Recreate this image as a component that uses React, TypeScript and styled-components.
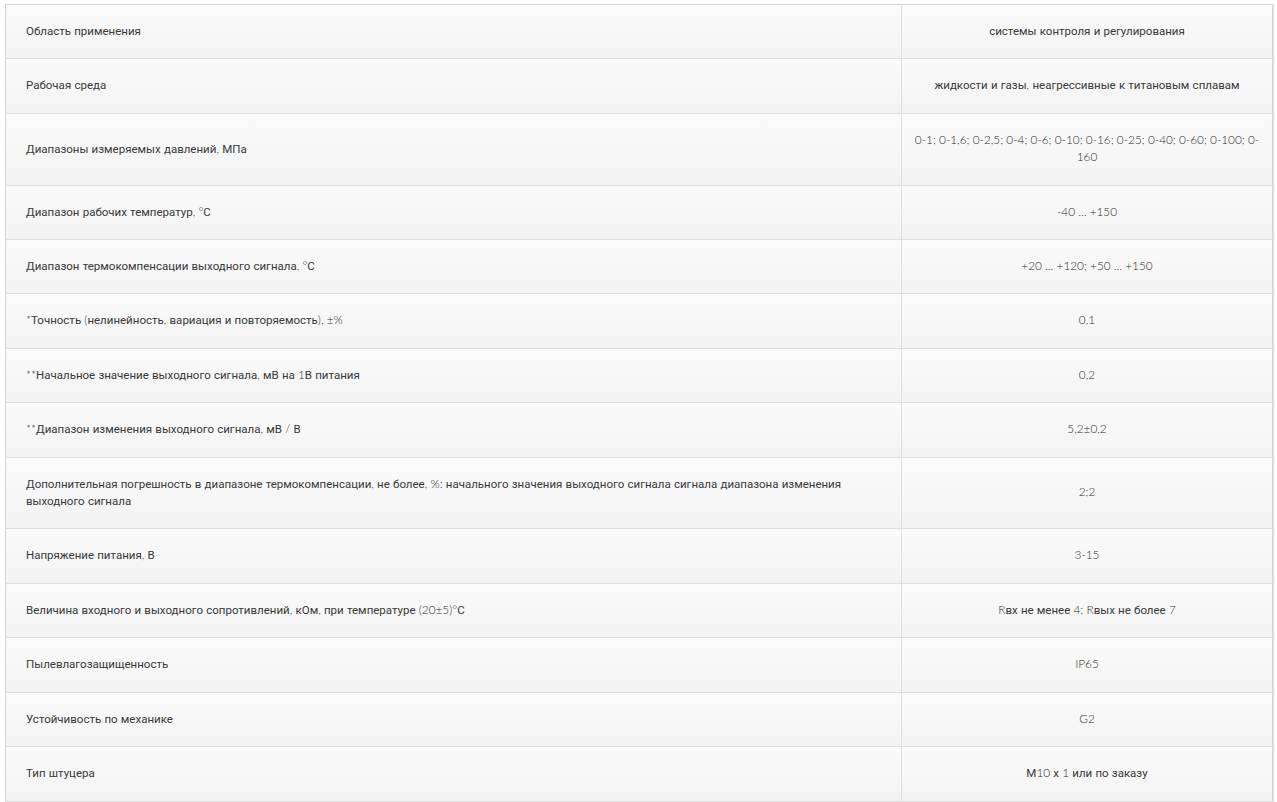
import React from "react";
import styled, { createGlobalStyle } from "styled-components";

const Global = createGlobalStyle`
  html, body { margin: 0; padding: 0; background: #ffffff; }
  body { font-family: Roboto, "Liberation Sans", sans-serif; }
`;

const Page = styled.div`
  padding: 4px 4px 0 5px;
`;

const Table = styled.table`
  width: 1268px;
  border-collapse: collapse;
  border: 1px solid #d4d4d4;
  box-shadow: 1px 0 1px rgba(0, 0, 0, 0.12);
  font-family: Roboto, "Liberation Sans", sans-serif;
  font-size: 11.5px;
  line-height: 17.4px;
  color: #383838;
`;

const Row = styled.tr`
  background: linear-gradient(to bottom, #fbfbfb 0%, #f3f3f3 100%);
`;

const Name = styled.td`
  width: 855px;
  height: 17.4px;
  padding: 18px 20px 18px 20px;
  border-bottom: 1px solid #dedede;
  border-right: 1px solid #dedede;
  text-align: left;
  vertical-align: middle;
`;

const Value = styled.td`
  padding: 18px 12px;
  border-bottom: 1px solid #dedede;
  text-align: center;
  vertical-align: middle;
`;

const Latin = styled.span`
  font-family: Lato, sans-serif;
  font-size: 11.8px;
  font-weight: 300;
  line-height: 1;
  color: #2e2e2e;
`;

function Mixed({ text }: { text: string }) {
  const parts = text.split(/([\u0000-\u024F]+)/).filter((p) => p.length > 0);
  return (
    <>
      {parts.map((p, i) =>
        /^[\u0000-\u024F]+$/.test(p) ? (
          <Latin key={i}>{p}</Latin>
        ) : (
          <React.Fragment key={i}>{p}</React.Fragment>
        )
      )}
    </>
  );
}

const rows: [string, string][] = [
  ["Область применения", "системы контроля и регулирования"],
  ["Рабочая среда", "жидкости и газы, неагрессивные к титановым сплавам"],
  [
    "Диапазоны измеряемых давлений, МПа",
    "0-1; 0-1,6; 0-2,5; 0-4; 0-6; 0-10; 0-16; 0-25; 0-40; 0-60; 0-100; 0-160",
  ],
  ["Диапазон рабочих температур, °С", "-40 ... +150"],
  ["Диапазон термокомпенсации выходного сигнала, °С", "+20 ... +120; +50 ... +150"],
  ["*Точность (нелинейность, вариация и повторяемость), ±%", "0,1"],
  ["**Начальное значение выходного сигнала, мВ на 1В питания", "0,2"],
  ["**Диапазон изменения выходного сигнала, мВ / В", "5,2±0,2"],
  [
    "Дополнительная погрешность в диапазоне термокомпенсации, не более, %: начального значения выходного сигнала сигнала диапазона изменения выходного сигнала",
    "2;2",
  ],
  ["Напряжение питания, В", "3-15"],
  [
    "Величина входного и выходного сопротивлений, кОм, при температуре (20±5)°С",
    "Rвх не менее 4; Rвых не более 7",
  ],
  ["Пылевлагозащищенность", "IP65"],
  ["Устойчивость по механике", "G2"],
  ["Тип штуцера", "М10 х 1 или по заказу"],
];

export default function App() {
  return (
    <>
      <Global />
      <Page>
        <Table>
          <tbody>
            {rows.map(([n, v], i) => (
              <Row key={i}>
                <Name>
                  <Mixed text={n} />
                </Name>
                <Value>
                  <Mixed text={v} />
                </Value>
              </Row>
            ))}
          </tbody>
        </Table>
      </Page>
    </>
  );
}
